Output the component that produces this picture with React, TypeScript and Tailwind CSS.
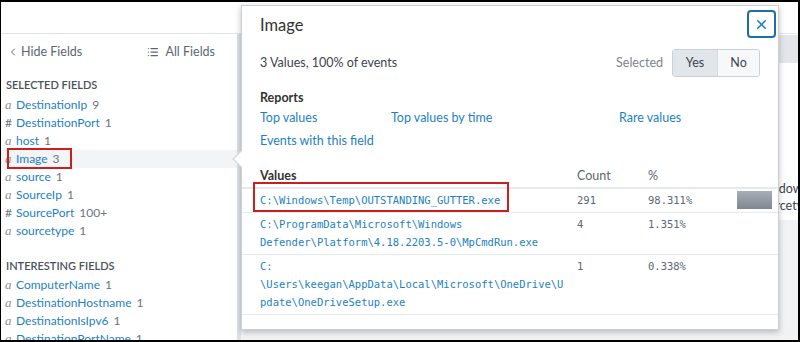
import { ChevronLeft, List, X } from "lucide-react";

type Field = { kind: "a" | "#"; name: string; count: string; active?: boolean };

const selected: Field[] = [
  { kind: "a", name: "DestinationIp", count: "9" },
  { kind: "#", name: "DestinationPort", count: "1" },
  { kind: "a", name: "host", count: "1" },
  { kind: "a", name: "Image", count: "3", active: true },
  { kind: "a", name: "source", count: "1" },
  { kind: "a", name: "SourceIp", count: "1" },
  { kind: "#", name: "SourcePort", count: "100+" },
  { kind: "a", name: "sourcetype", count: "1" },
];

const interesting: Field[] = [
  { kind: "a", name: "ComputerName", count: "1" },
  { kind: "a", name: "DestinationHostname", count: "1" },
  { kind: "a", name: "DestinationIsIpv6", count: "1" },
  { kind: "a", name: "DestinationPortName", count: "1" },
];

const values = [
  { lines: ["C:\\Windows\\Temp\\OUTSTANDING_GUTTER.exe"], count: "291", pct: "98.311%", bar: true },
  {
    lines: ["C:\\ProgramData\\Microsoft\\Windows", "Defender\\Platform\\4.18.2203.5-0\\MpCmdRun.exe"],
    count: "4",
    pct: "1.351%",
  },
  {
    lines: ["C:", "\\Users\\keegan\\AppData\\Local\\Microsoft\\OneDrive\\U", "pdate\\OneDriveSetup.exe"],
    count: "1",
    pct: "0.338%",
  },
];

const mono = "font-['DejaVu_Sans_Mono',monospace] text-[10.5px]";

function FieldRow({ f }: { f: Field }) {
  return (
    <div className={`relative flex h-[18px] items-center pl-[4px] ${f.active ? "bg-[#f2f4f5]" : ""}`}>
      {f.kind === "a" ? (
        <span className="w-[11px] font-['Liberation_Serif',serif] text-[13px] italic text-[#8a9099]">a</span>
      ) : (
        <span className="w-[11px] text-[12px] text-[#6b7480]">#</span>
      )}
      <span className="text-[#1e7fc1]">{f.name}</span>
      <span className="ml-[5px] text-[#6b7480]">{f.count}</span>
      {f.active && (
        <span className="absolute left-[6px] top-[-2px] h-[21px] w-[65px] border-2 border-[#c8201f]" />
      )}
    </div>
  );
}

export default function App() {
  return (
    <div className="relative h-[342px] w-[800px] overflow-hidden border-b-2 border-l border-r-2 border-t-2 border-black bg-white font-['Lato',sans-serif] text-[12px] text-[#3c444d]">
      <div className="flex h-full flex-col">
        <div className="h-[32px] shrink-0 border-b border-[#e1e5ea] bg-white" />
        <div className="flex min-h-0 flex-1">
          {/* sidebar */}
          <div className="w-[236px] shrink-0 leading-[18px]">
            <div className="flex h-[36px] items-center justify-between pl-[6px] pr-[22px] text-[12.5px] text-[#5c6773]">
              <span className="flex items-center gap-[2px]">
                <ChevronLeft size={12} strokeWidth={2} />
                Hide Fields
              </span>
              <span className="flex items-center gap-[6px]">
                <List size={12} strokeWidth={2.5} />
                All Fields
              </span>
            </div>
            <div className="mt-[6px] pl-[5px] text-[11px] font-semibold text-[#4a525c]">SELECTED FIELDS</div>
            <div className="mt-[2px]">
              {selected.map((f) => (
                <FieldRow key={f.name} f={f} />
              ))}
            </div>
            <div className="mt-[17px] pl-[5px] text-[11px] font-semibold text-[#4a525c]">INTERESTING FIELDS</div>
            <div className="mt-[1px]">
              {interesting.map((f) => (
                <FieldRow key={f.name} f={f} />
              ))}
            </div>
          </div>
          <div className="w-[4px] shrink-0 bg-[#dde1e5]" />
          {/* main area behind popup */}
          <div className="flex min-w-0 flex-1 flex-col">
            <div className="mt-[1px] h-[28px] shrink-0 bg-[#e2e6ea]" />
            <div className="h-[157px] shrink-0 pt-[117px] pl-[515px] text-[12.5px] leading-[17px] text-[#3c444d]">
              <div className="whitespace-nowrap">Windows</div>
              <div className="whitespace-nowrap">sourcetype</div>
            </div>
            <div className="flex-1 bg-[#f1f2f4]" />
          </div>
        </div>
      </div>

      {/* field summary popup */}
      <div className="absolute left-[240px] top-[3px] w-[538px] border border-[#c9d0d7] bg-white shadow-[0_2px_6px_rgba(0,0,0,0.25)]">
        <span className="absolute left-[-7px] top-[147px] h-[12px] w-[12px] rotate-45 border-b border-l border-[#c9d0d7] bg-white" />
        <button className="absolute right-[2px] top-[4px] flex h-[28px] w-[29px] items-center justify-center rounded-[4px] border-2 border-[#1d6fa6] bg-white text-[#1a7dc4]">
          <X size={15} strokeWidth={2.5} />
        </button>
        <div className="px-[18px] pt-[9px]">
          <div className="text-[16.5px] leading-[20px] text-[#333]">Image</div>
          <div className="mt-[14px] flex h-[28px] items-center justify-between">
            <span className="text-[12.5px] text-[#3c444d]">3 Values, 100% of events</span>
            <div className="flex items-center">
              <span className="mr-[9px] text-[12.5px] text-[#7d848d]">Selected</span>
              <div className="flex h-[28px] overflow-hidden rounded-[3px] border border-[#c9d0d7] text-[12.5px] text-[#3c444d]">
                <span className="flex w-[44px] items-center justify-center bg-[#e1e6eb]">Yes</span>
                <span className="flex w-[42px] items-center justify-center border-l border-[#d5dbe1] bg-[#f7f8fa]">No</span>
              </div>
            </div>
          </div>
          <div className="mt-[12px] text-[12.5px] font-bold leading-[18px] text-[#333]">Reports</div>
          <div className="mt-[2px] flex text-[12.5px] leading-[18px] text-[#1e7fc1]">
            <span className="w-[131px]">Top values</span>
            <span className="w-[228px]">Top values by time</span>
            <span>Rare values</span>
          </div>
          <div className="mt-[5px] text-[12.5px] leading-[18px] text-[#1e7fc1]">Events with this field</div>
        </div>

        <div className="mt-[15px] pb-[14px]">
          <div className="flex h-[24px] items-center border-b-2 border-[#e6e9ed] text-[12.5px]">
            <span className="w-[335px] pl-[18px] font-bold text-[#333]">Values</span>
            <span className="w-[71px] text-[#5c6773]">Count</span>
            <span className="text-[#5c6773]">%</span>
          </div>
          {values.map((v, i) => (
            <div key={i} className="relative flex border-b border-[#e6e9ed] pb-[3px] pt-[2px] leading-[18px]">
              <div className={`w-[335px] pl-[18px] text-[#1e7fc1] ${mono}`}>
                {v.lines.map((l) => (
                  <div key={l} className="whitespace-nowrap">
                    {l}
                  </div>
                ))}
              </div>
              <div className={`w-[71px] text-[#5c6773] ${mono}`}>{v.count}</div>
              <div className={`w-[89px] text-[#5c6773] ${mono}`}>{v.pct}</div>
              {v.bar && (
                <div className="h-[18px] w-[35px] bg-gradient-to-b from-[#a9afb7] to-[#7f8690]" />
              )}
              {i === 0 && (
                <span className="absolute left-[11px] top-[-7px] h-[30px] w-[256px] border-2 border-[#c8201f]" />
              )}
            </div>
          ))}
        </div>
      </div>
    </div>
  );
}
